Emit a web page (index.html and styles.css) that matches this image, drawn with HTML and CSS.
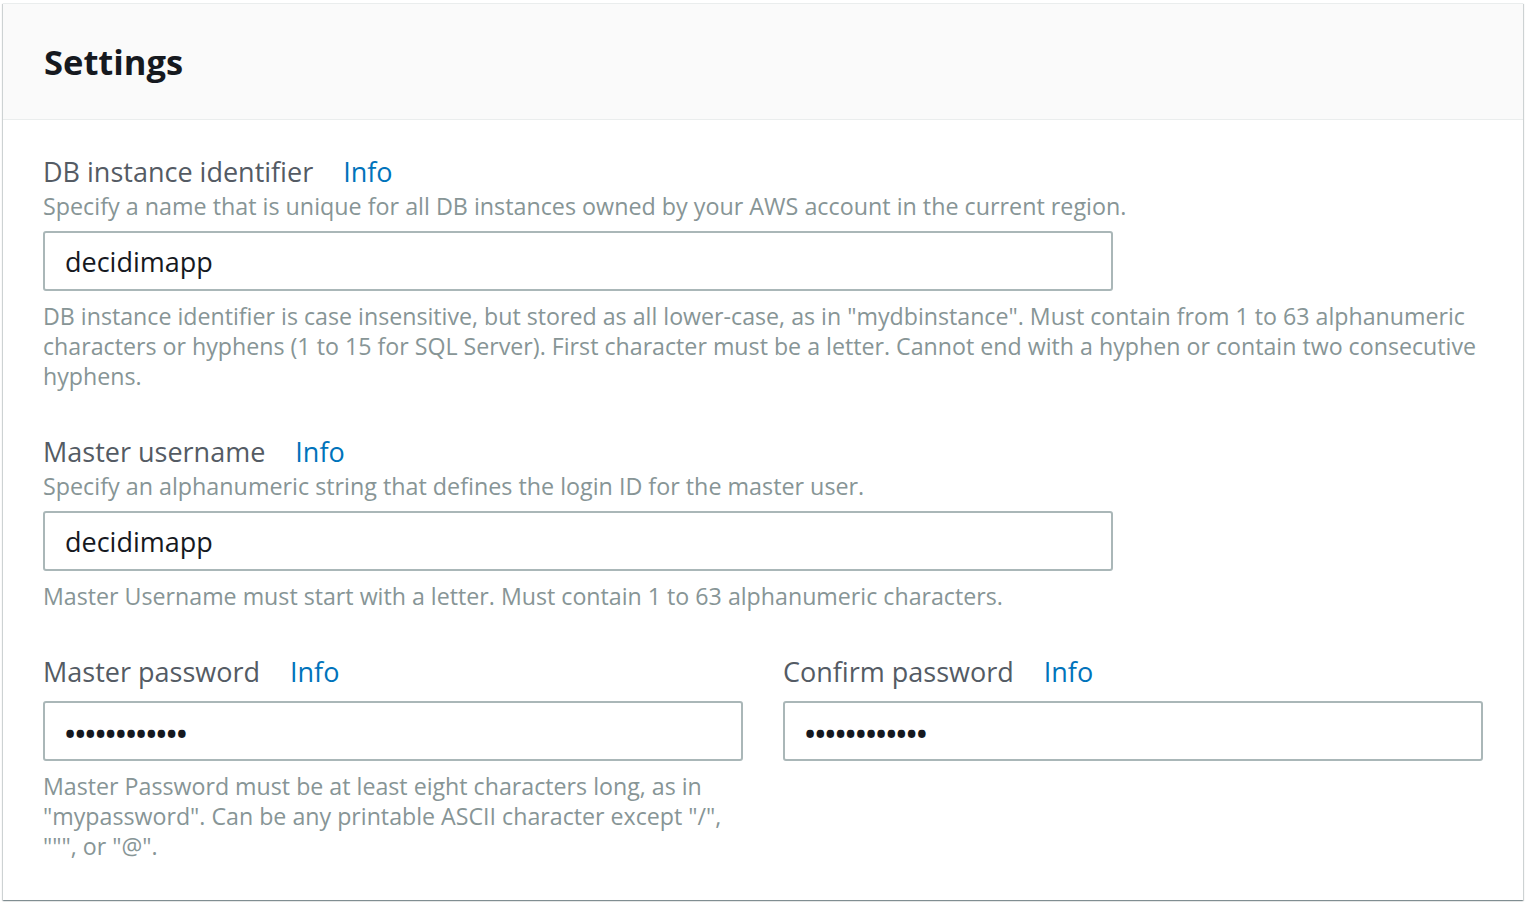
FILE: index.html
```html
<!DOCTYPE html>
<html lang="en">
<head>
<meta charset="utf-8">
<title>Settings</title>
<link rel="stylesheet" href="styles.css">
</head>
<body>
<section class="panel">
  <header class="panel-header">
    <h2 class="panel-title">Settings</h2>
  </header>
  <div class="panel-body">
    <div class="field">
      <div class="label-row"><span class="label">DB instance identifier</span><a class="info">Info</a></div>
      <div class="hint">Specify a name that is unique for all DB instances owned by your AWS account in the current region.</div>
      <div class="input wide">decidimapp</div>
      <div class="constraint">DB instance identifier is case insensitive, but stored as all lower-case, as in "mydbinstance". Must contain from 1 to 63 alphanumeric characters or hyphens (1 to 15 for SQL Server). First character must be a letter. Cannot end with a hyphen or contain two consecutive hyphens.</div>
    </div>
    <div class="field">
      <div class="label-row"><span class="label">Master username</span><a class="info">Info</a></div>
      <div class="hint">Specify an alphanumeric string that defines the login ID for the master user.</div>
      <div class="input wide">decidimapp</div>
      <div class="constraint">Master Username must start with a letter. Must contain 1 to 63 alphanumeric characters.</div>
    </div>
    <div class="field-grid">
      <div class="field">
        <div class="label-row"><span class="label">Master password</span><a class="info">Info</a></div>
        <div class="input dots">&bull;&bull;&bull;&bull;&bull;&bull;&bull;&bull;&bull;&bull;&bull;&bull;</div>
        <div class="constraint">Master Password must be at least eight characters long, as in "mypassword". Can be any printable ASCII character except "/", """, or "@".</div>
      </div>
      <div class="field">
        <div class="label-row"><span class="label">Confirm password</span><a class="info">Info</a></div>
        <div class="input dots">&bull;&bull;&bull;&bull;&bull;&bull;&bull;&bull;&bull;&bull;&bull;&bull;</div>
      </div>
    </div>
  </div>
</section>
</body>
</html>
```
FILE: styles.css
```css
html, body {
  margin: 0;
  padding: 0;
  background: #ffffff;
}
body {
  padding: 3px;
  font-family: "Open Sans", "Noto Sans", sans-serif;
}
.panel {
  background: #ffffff;
  border-top: 1px solid #eaeded;
  box-shadow: 0 1px 1px 0 rgba(0, 28, 36, 0.3), 1px 1px 1px 0 rgba(0, 28, 36, 0.15), -1px 1px 1px 0 rgba(0, 28, 36, 0.15);
  height: 897px;
  box-sizing: border-box;
}
.panel-header {
  background: #fafafa;
  border-bottom: 1px solid #eaeded;
  height: 115px;
  display: flex;
  align-items: center;
  padding: 0 40px;
}
.panel-title {
  margin: 0;
  font-size: 34.5px;
  font-weight: 700;
  color: #16191f;
  line-height: 40px;
  padding-left: 1px;
}
.panel-body {
  padding: 34px 40px 0 40px;
  display: flex;
  flex-direction: column;
  gap: 43px;
}
.field {
  display: flex;
  flex-direction: column;
}
.label-row {
  display: flex;
  gap: 30px;
  line-height: 36px;
  font-size: 27px;
}
.label {
  color: #545b64;
}
.info {
  color: #0073bb;
  cursor: pointer;
}
.hint {
  font-size: 23.3px;
  line-height: 30px;
  color: #879596;
  margin-top: 1px;
}
.input {
  margin-top: 10px;
  height: 60px;
  box-sizing: border-box;
  border: 2px solid #aab7b8;
  border-radius: 3px;
  padding: 0 20px;
  display: flex;
  align-items: center;
  font-size: 27px;
  color: #16191f;
}
.input.wide {
  width: 1070px;
}
.input.dots {
  margin-top: 11px;
  font-size: 27px;
  font-weight: 700;
  padding-top: 4px;
}
.constraint {
  margin-top: 10px;
  font-size: 23.2px;
  line-height: 30px;
  color: #879596;
}
.field-grid {
  display: grid;
  grid-template-columns: 700px 700px;
  gap: 40px;
}
```
